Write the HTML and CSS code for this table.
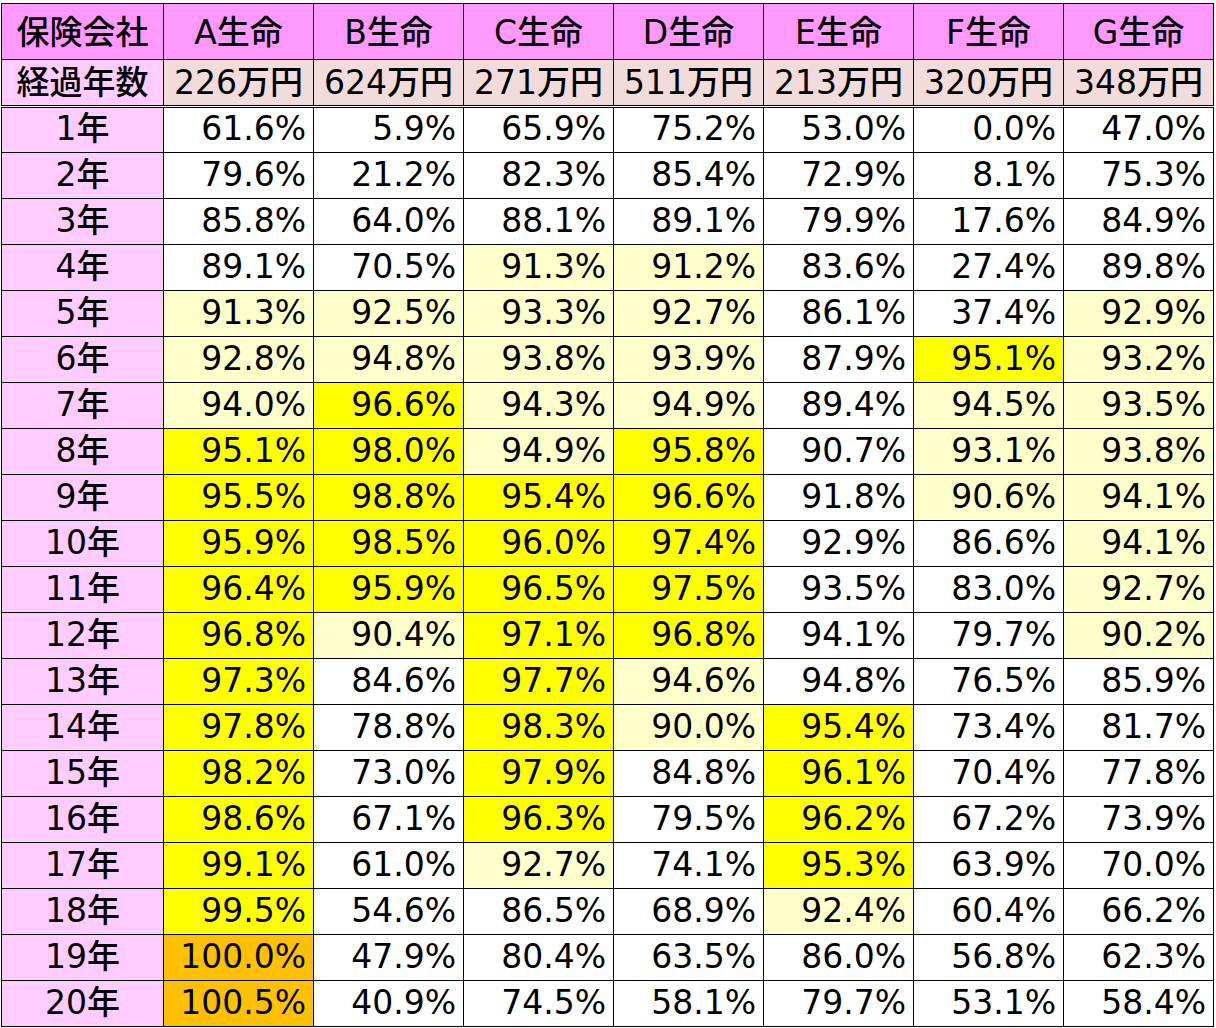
FILE: index.html
```html
<!DOCTYPE html>
<html lang="ja">
<head>
<meta charset="utf-8">
<title>解約返戻率</title>
<link rel="stylesheet" href="styles.css">
</head>
<body>
<table class="rates">
<colgroup><col class="c-head"><col class="c-val"><col class="c-val"><col class="c-val"><col class="c-val"><col class="c-val"><col class="c-val"><col class="c-val"></colgroup>
<thead>
<tr class="r-company"><th>保険会社</th><th>A生命</th><th>B生命</th><th>C生命</th><th>D生命</th><th>E生命</th><th>F生命</th><th>G生命</th></tr>
<tr class="r-amount"><th>経過年数</th><td>226万円</td><td>624万円</td><td>271万円</td><td>511万円</td><td>213万円</td><td>320万円</td><td>348万円</td></tr>
</thead>
<tbody>
<tr><th>1年</th><td>61.6%</td><td>5.9%</td><td>65.9%</td><td>75.2%</td><td>53.0%</td><td>0.0%</td><td>47.0%</td></tr>
<tr><th>2年</th><td>79.6%</td><td>21.2%</td><td>82.3%</td><td>85.4%</td><td>72.9%</td><td>8.1%</td><td>75.3%</td></tr>
<tr><th>3年</th><td>85.8%</td><td>64.0%</td><td>88.1%</td><td>89.1%</td><td>79.9%</td><td>17.6%</td><td>84.9%</td></tr>
<tr><th>4年</th><td>89.1%</td><td>70.5%</td><td class="ly">91.3%</td><td class="ly">91.2%</td><td>83.6%</td><td>27.4%</td><td>89.8%</td></tr>
<tr><th>5年</th><td class="ly">91.3%</td><td class="ly">92.5%</td><td class="ly">93.3%</td><td class="ly">92.7%</td><td>86.1%</td><td>37.4%</td><td class="ly">92.9%</td></tr>
<tr><th>6年</th><td class="ly">92.8%</td><td class="ly">94.8%</td><td class="ly">93.8%</td><td class="ly">93.9%</td><td>87.9%</td><td class="y">95.1%</td><td class="ly">93.2%</td></tr>
<tr><th>7年</th><td class="ly">94.0%</td><td class="y">96.6%</td><td class="ly">94.3%</td><td class="ly">94.9%</td><td>89.4%</td><td class="ly">94.5%</td><td class="ly">93.5%</td></tr>
<tr><th>8年</th><td class="y">95.1%</td><td class="y">98.0%</td><td class="ly">94.9%</td><td class="y">95.8%</td><td>90.7%</td><td class="ly">93.1%</td><td class="ly">93.8%</td></tr>
<tr><th>9年</th><td class="y">95.5%</td><td class="y">98.8%</td><td class="y">95.4%</td><td class="y">96.6%</td><td>91.8%</td><td class="ly">90.6%</td><td class="ly">94.1%</td></tr>
<tr><th>10年</th><td class="y">95.9%</td><td class="y">98.5%</td><td class="y">96.0%</td><td class="y">97.4%</td><td>92.9%</td><td>86.6%</td><td class="ly">94.1%</td></tr>
<tr><th>11年</th><td class="y">96.4%</td><td class="y">95.9%</td><td class="y">96.5%</td><td class="y">97.5%</td><td>93.5%</td><td>83.0%</td><td class="ly">92.7%</td></tr>
<tr><th>12年</th><td class="y">96.8%</td><td class="ly">90.4%</td><td class="y">97.1%</td><td class="y">96.8%</td><td>94.1%</td><td>79.7%</td><td class="ly">90.2%</td></tr>
<tr><th>13年</th><td class="y">97.3%</td><td>84.6%</td><td class="y">97.7%</td><td class="ly">94.6%</td><td>94.8%</td><td>76.5%</td><td>85.9%</td></tr>
<tr><th>14年</th><td class="y">97.8%</td><td>78.8%</td><td class="y">98.3%</td><td class="ly">90.0%</td><td class="y">95.4%</td><td>73.4%</td><td>81.7%</td></tr>
<tr><th>15年</th><td class="y">98.2%</td><td>73.0%</td><td class="y">97.9%</td><td>84.8%</td><td class="y">96.1%</td><td>70.4%</td><td>77.8%</td></tr>
<tr><th>16年</th><td class="y">98.6%</td><td>67.1%</td><td class="y">96.3%</td><td>79.5%</td><td class="y">96.2%</td><td>67.2%</td><td>73.9%</td></tr>
<tr><th>17年</th><td class="y">99.1%</td><td>61.0%</td><td class="ly">92.7%</td><td>74.1%</td><td class="y">95.3%</td><td>63.9%</td><td>70.0%</td></tr>
<tr><th>18年</th><td class="y">99.5%</td><td>54.6%</td><td>86.5%</td><td>68.9%</td><td class="ly">92.4%</td><td>60.4%</td><td>66.2%</td></tr>
<tr><th>19年</th><td class="o">100.0%</td><td>47.9%</td><td>80.4%</td><td>63.5%</td><td>86.0%</td><td>56.8%</td><td>62.3%</td></tr>
<tr><th>20年</th><td class="o">100.5%</td><td>40.9%</td><td>74.5%</td><td>58.1%</td><td>79.7%</td><td>53.1%</td><td>58.4%</td></tr>
</tbody>
</table>
</body>
</html>
```

FILE: styles.css
```css
html, body {
  margin: 0;
  padding: 0;
  background: #ffffff;
}

body {
  padding: 3px 0 0 1px;
  font-family: "DejaVu Sans", "Noto Sans CJK JP", sans-serif;
  font-weight: 500;
  color: #000000;
}

.rates {
  border-collapse: collapse;
  table-layout: fixed;
  width: 1212px;
  font-size: 33px;
  line-height: 38px;
}

.c-head { width: 162px; }
.c-val { width: 150px; }

.rates th,
.rates td {
  border: 1px solid #000000;
  padding: 0 7px 2px 0;
  font-weight: 500;
  text-align: right;
  white-space: nowrap;
  overflow: hidden;
  vertical-align: middle;
  background: #ffffff;
}

.rates th {
  text-align: center;
  padding: 0 0 2px 0;
  background: #ffccff;
}

.rates tbody tr { height: 46px; }

.r-company { height: 56px; }
.r-company th {
  background: #ff99ff;
  padding: 2px 0 0 0;
}

.r-amount { height: 47px; }
.r-amount th,
.r-amount td {
  border-bottom: 3px double #000000;
  text-align: center;
  padding: 1px 0 0 0;
}
.r-amount th { background: #ffccff; }
.r-amount td { background: #f2dcdb; }

.rates td.ly { background: #ffffcc; }
.rates td.y { background: #ffff00; }
.rates td.o { background: #ffc000; }
```
